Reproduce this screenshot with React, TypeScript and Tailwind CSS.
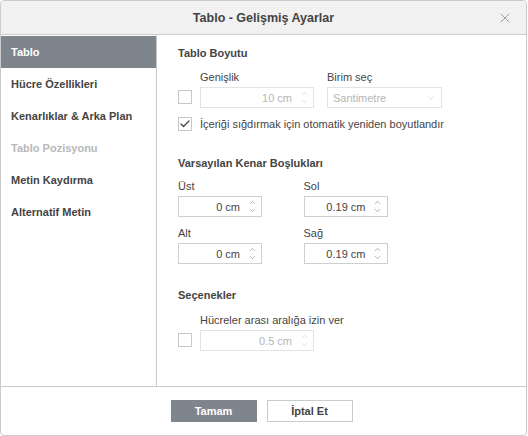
import { X, Check, ChevronUp, ChevronDown } from 'lucide-react'

const font = { fontFamily: '"Liberation Sans", Arial, sans-serif' }

const tabs = [
  { label: 'Tablo', active: true },
  { label: 'Hücre Özellikleri' },
  { label: 'Kenarlıklar & Arka Plan' },
  { label: 'Tablo Pozisyonu', disabled: true },
  { label: 'Metin Kaydırma' },
  { label: 'Alternatif Metin' },
]

function Spin({ value, width, disabled }: { value: string; width: string; disabled?: boolean }) {
  return (
    <div
      className={`flex h-[21px] items-center border ${width} ${disabled ? 'border-[#e3e3e3] text-[#b5b5b5]' : 'border-[#cfcfcf] text-[#444]'}`}
    >
      <span className="flex-1 pr-[6px] text-right">{value}</span>
      <div className="mr-[3px] flex w-[12px] flex-col items-center leading-none">
        <ChevronUp size={9} strokeWidth={1.5} color={disabled ? '#c8c8c8' : '#777'} />
        <ChevronDown size={9} strokeWidth={1.5} color={disabled ? '#c8c8c8' : '#777'} className="-mt-[1px]" />
      </div>
    </div>
  )
}

function Box({ checked }: { checked?: boolean }) {
  return (
    <div className="flex h-[14px] w-[14px] shrink-0 items-center justify-center border border-[#c8c8c8] bg-white">
      {checked && <Check size={12} strokeWidth={2.5} color="#444" />}
    </div>
  )
}

function Label({ children }: { children: string }) {
  return <div className="mb-[3px] h-[14px] leading-[14px]">{children}</div>
}

export default function App() {
  return (
    <div className="h-[436px] w-[528px] bg-white text-[11px] leading-[14px] text-[#444]" style={font}>
      <div className="flex h-[436px] w-[527px] flex-col overflow-hidden rounded-[4px] border border-[#cbcbcb]">
        {/* Header */}
        <div className="relative flex h-[34px] shrink-0 items-center justify-center border-b border-[#cbcbcb] bg-[#f1f1f1]">
          <span className="text-[12.5px] font-bold text-[#444]">Tablo - Gelişmiş Ayarlar</span>
          <X size={16} strokeWidth={1.2} color="#8a8a8a" className="absolute right-[13px] top-[9px]" />
        </div>

        {/* Body */}
        <div className="flex flex-1">
          <div className="w-[156px] shrink-0 border-r border-[#cbcbcb] pt-[1px]">
            {tabs.map(t => (
              <div
                key={t.label}
                className={`flex h-[32px] items-center pl-[10px] font-bold ${
                  t.active ? 'bg-[#7e858c] text-white' : t.disabled ? 'text-[#b8b8b8]' : 'text-[#444]'
                }`}
              >
                {t.label}
              </div>
            ))}
          </div>

          <div className="flex-1 pl-[21px] pt-[11px]">
            <div className="font-bold">Tablo Boyutu</div>
            <div className="mt-[10px] flex">
              <div className="w-[22px] pt-[20px]">
                <Box />
              </div>
              <div>
                <Label>Genişlik</Label>
                <Spin value="10 cm" width="w-[114px]" disabled />
              </div>
              <div className="ml-[13px]">
                <Label>Birim seç</Label>
                <div className="flex h-[21px] w-[115px] items-center justify-between border border-[#e3e3e3] px-[5px] text-[#b5b5b5]">
                  <span>Santimetre</span>
                  <ChevronDown size={10} strokeWidth={1.2} color="#bbb" />
                </div>
              </div>
            </div>
            <div className="mt-[9px] flex items-center">
              <div className="w-[22px]">
                <Box checked />
              </div>
              <span>İçeriği sığdırmak için otomatik yeniden boyutlandır</span>
            </div>

            <div className="mt-[25px] font-bold">Varsayılan Kenar Boşlukları</div>
            <div className="mt-[9px] grid w-[210px] grid-cols-2 gap-x-[41px] gap-y-[9px]">
              {[
                ['Üst', '0 cm'],
                ['Sol', '0.19 cm'],
                ['Alt', '0 cm'],
                ['Sağ', '0.19 cm'],
              ].map(([l, v]) => (
                <div key={l}>
                  <Label>{l}</Label>
                  <Spin value={v} width="w-[84px]" />
                </div>
              ))}
            </div>

            <div className="mt-[24px] font-bold">Seçenekler</div>
            <div className="mt-[11px] flex">
              <div className="w-[22px] pt-[20px]">
                <Box />
              </div>
              <div>
                <Label>Hücreler arası aralığa izin ver</Label>
                <Spin value="0.5 cm" width="w-[114px]" disabled />
              </div>
            </div>
          </div>
        </div>

        {/* Footer */}
        <div className="flex h-[49px] shrink-0 items-center justify-center gap-[10px] border-t border-[#cbcbcb] pr-[4px]">
          <div className="flex h-[22px] w-[86px] items-center justify-center bg-[#7e858c] font-bold text-white">
            Tamam
          </div>
          <div className="flex h-[22px] w-[86px] items-center justify-center border border-[#cbcbcb] font-bold text-[#444]">
            İptal Et
          </div>
        </div>
      </div>
    </div>
  )
}
